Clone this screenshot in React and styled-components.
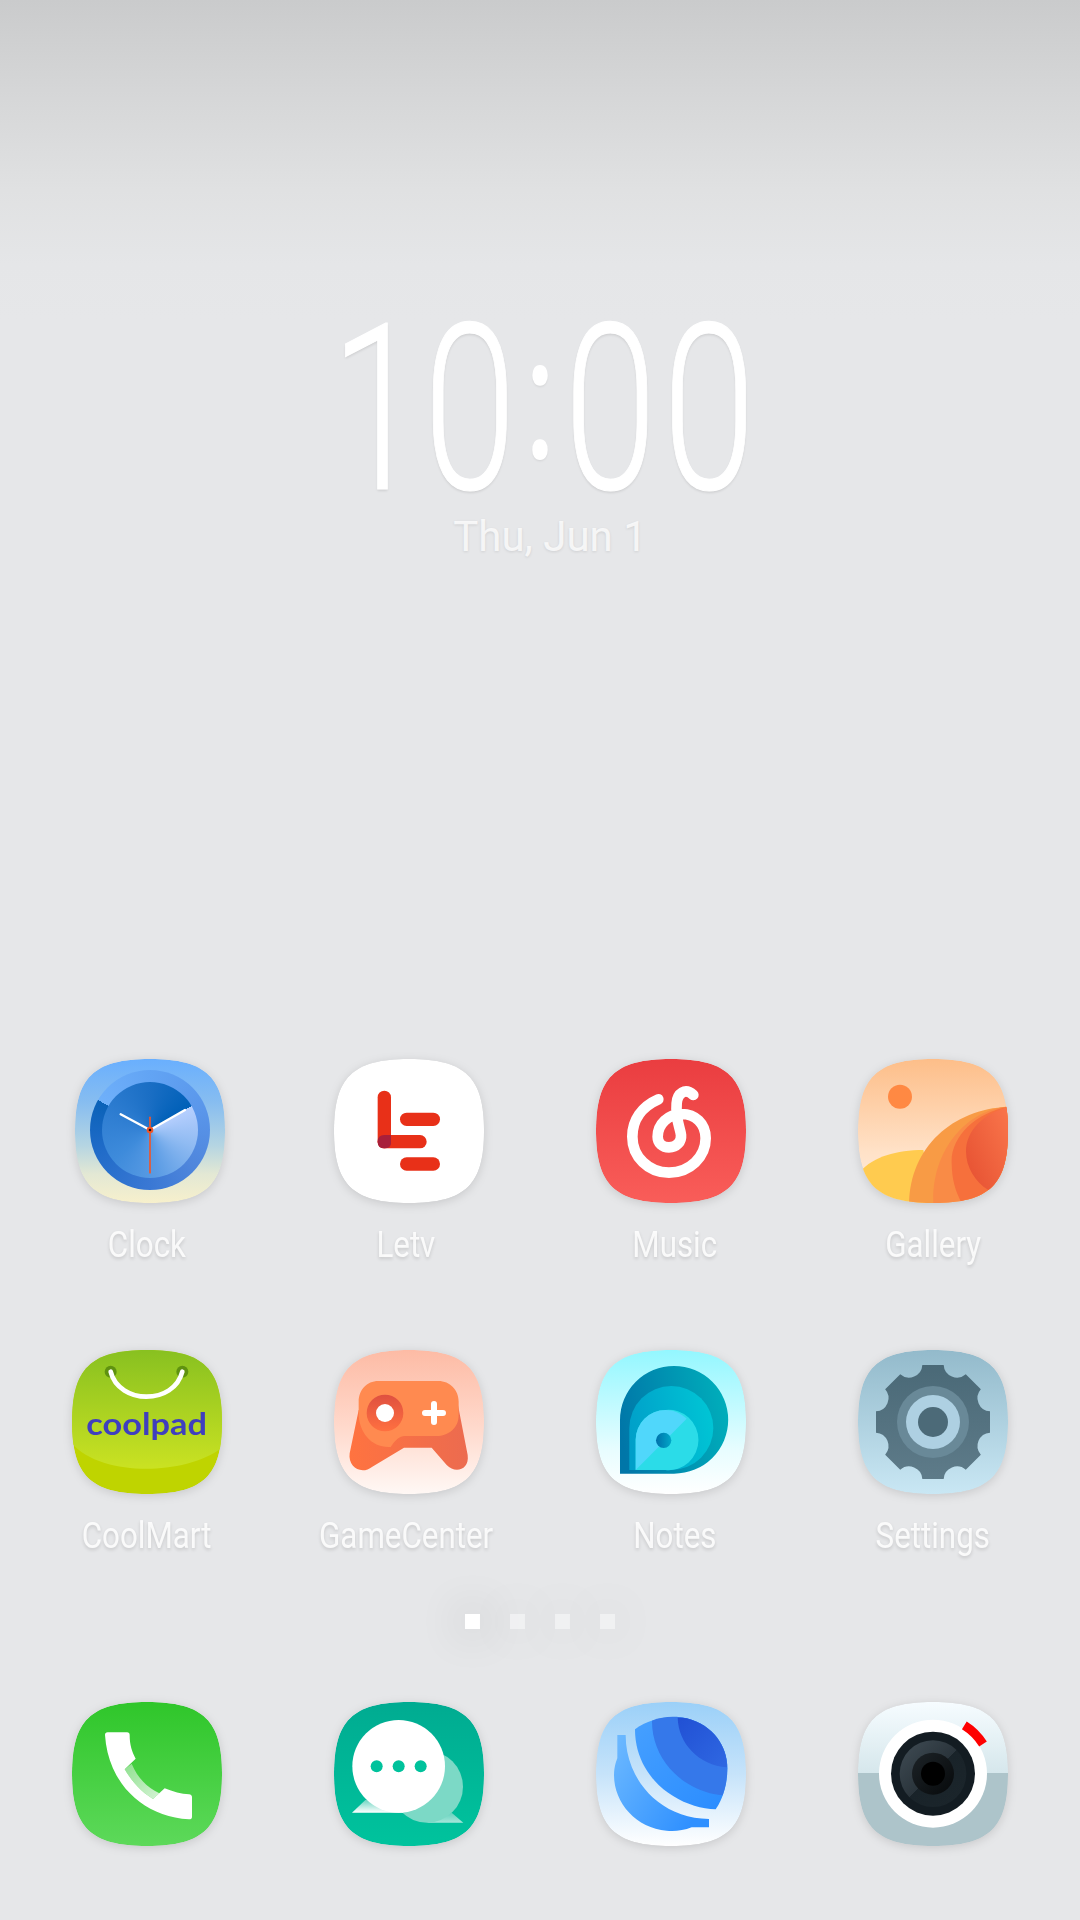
import React from 'react';
import styled, { createGlobalStyle } from 'styled-components';

const Global = createGlobalStyle`
  html, body { margin: 0; padding: 0; background: #e6e7e9; }
`;

const Screen = styled.div`
  width: 1080px;
  height: 1920px;
  overflow: hidden;
  display: flex;
  flex-direction: column;
  background: linear-gradient(180deg, #cacbcc 0px, #d5d6d7 90px, #e0e1e2 190px, #e5e6e8 265px, #e6e7e9 320px);
  font-family: Roboto, "Liberation Sans", sans-serif;
`;
const ClockBlock = styled.div`
  height: 1059px;
  display: flex;
  flex-direction: column;
  align-items: center;
  flex: none;
`;
const Time = styled.div`
  margin-top: 290px;
  height: 240px;
  line-height: 240px;
  font-size: 232px;
  font-weight: 300;
  color: #fff;
  -webkit-text-stroke: 1px #fff;
  transform: translateX(6px) scaleX(0.72);
  letter-spacing: 8.5px;
  white-space: nowrap;
  text-shadow: 0 2px 3px rgba(0,0,0,.1);
`;
const Lead = styled.span`
  letter-spacing: 0;
`;
const Colon = styled.span`
  font-size: 172px;
  font-weight: 400;
  line-height: 0;
  vertical-align: 31px;
  -webkit-text-stroke: 2px #fff;
  margin: 0 4px;
`;
const DateLine = styled.div`
  margin-top: -18px;
  margin-left: 20px;
  font-size: 42px;
  line-height: 50px;
  font-weight: 400;
  color: rgba(255,255,255,.78);
  text-shadow: 0 1px 3px rgba(0,0,0,.1);
`;
const AppGrid = styled.div`
  display: grid;
  grid-template-columns: repeat(4, 262px);
  grid-auto-rows: 291px;
  padding-left: 16px;
  flex: none;
`;
const Cell = styled.div`
  display: flex;
  flex-direction: column;
  align-items: center;
`;
const IconSvg = styled.svg`
  display: block;
  width: 150px;
  height: 144px;
  overflow: visible;
  flex: none;
  margin-left: ${p => (p.$shift || 0) * 2}px;
  filter: drop-shadow(0 2px 5px rgba(0,0,0,.13));
`;
const Label = styled.div`
  margin-top: 20px;
  margin-left: ${p => (p.$shift || 0) * 2}px;
  font-size: 36px;
  line-height: 44px;
  font-weight: 400;
  color: rgba(255,255,255,.85);
  transform: scaleX(0.87);
  white-space: nowrap;
  text-shadow: 0 2px 4px rgba(0,0,0,.14);
`;
const Pager = styled.div`
  display: flex;
  justify-content: center;
  gap: 30px;
  height: 88px;
  margin-top: -27px;
  flex: none;
`;
const Dot = styled.span`
  width: 15px;
  height: 15px;
  background: ${p => (p.$on ? '#ffffff' : 'rgba(255,255,255,.42)')};
  box-shadow: 0 0 34px ${p => (p.$on ? 20 : 24)}px rgba(0,0,0,${p => (p.$on ? .03 : .013)});
`;
const Dock = styled(AppGrid)`
  grid-auto-rows: 144px;
`;
const RoundDisc = styled.div`
  width: 100%;
  height: 100%;
  border-radius: 50%;
  background: ${p => p.$bg};
`;

const SQ = 'M75 0C132 0 150 19 150 72C150 125 132 144 75 144C18 144 0 125 0 72C0 19 18 0 75 0Z';

/* Each icon is drawn in the coordinates of a 3x crop, mapped onto the 150x144 tile. */
const Tile = ({ id, ox, oy, shift, bg, children, defs }) => (
  <IconSvg viewBox="0 0 150 144" $shift={shift}>
    <defs>
      <clipPath id={`${id}-clip`}><path d={SQ} /></clipPath>
      {bg && (
        <linearGradient id={`${id}-bg`} x1="0" y1="0" x2="0" y2="1">
          {bg.map(([o, c]) => <stop key={o} offset={o} stopColor={c} />)}
        </linearGradient>
      )}
      {defs}
    </defs>
    <g clipPath={`url(#${id}-clip)`}>
      <path d={SQ} fill={bg ? `url(#${id}-bg)` : '#fff'} />
      <g transform={`scale(${1 / 3}) translate(${-ox} ${-oy})`}>{children}</g>
    </g>
  </IconSvg>
);

const Lin = ({ id, x1 = 0, y1 = 0, x2 = 0, y2 = 1, stops }) => (
  <linearGradient id={id} x1={x1} y1={y1} x2={x2} y2={y2}>
    {stops.map(([o, c]) => <stop key={o} offset={o} stopColor={c} />)}
  </linearGradient>
);

const ClockIcon = () => (
  <Tile id="clk" ox={75} oy={57} shift={3} bg={[[0, '#69affe'], [.3, '#87bdf0'], [.6, '#b5d5e2'], [.8, '#e3e8d4'], [1, '#f7f0cc']]}>
    <foreignObject x="120" y="90" width="360" height="360">
      <RoundDisc $bg="conic-gradient(from 300deg, #6fb0fa 0deg, #62a4f4 60deg, #5a96ea 130deg, #4f86dc 190deg, #3a78d4 240deg, #1f6bc8 310deg, #0a62b8 360deg)" />
    </foreignObject>
    <foreignObject x="156" y="126" width="288" height="288">
      <RoundDisc $bg="conic-gradient(from 60deg, #b6cffe 0deg, #90bbf2 50deg, #5b9ce4 110deg, #3e8bdb 170deg, #2f7ed2 230deg, #1a6ec4 300deg, #0060b8 360deg)" />
    </foreignObject>
    <g strokeLinecap="round">
      <path d="M212 223L300 270L405 210" fill="none" stroke="#fff" strokeWidth="7" />
      <path d="M300 232V398" stroke="#f0562a" strokeWidth="5" />
    </g>
    <circle cx="300" cy="270" r="10" fill="#f0562a" />
    <circle cx="300" cy="270" r="4" fill="#111" />
  </Tile>
);

const LetvIcon = () => (
  <Tile id="let" ox={852} oy={57}>
    <g fill="#e83018">
      <rect x="983" y="152" width="40" height="173" rx="20" />
      <rect x="1050" y="218" width="120" height="40" rx="20" />
      <rect x="983" y="285" width="147" height="40" rx="20" />
      <rect x="1050" y="352" width="120" height="40" rx="20" />
    </g>
    <path d="M1003 285H1023V310Q1023 325 1003 325Q983 325 983 305Q983 285 1003 285Z" fill="#a81f3a" />
  </Tile>
);

const MusicIcon = () => (
  <Tile id="mus" ox={78} oy={57} bg={[[0, '#ea3d40'], [1, '#f95d59']]}>
    <path
      d="M265 178C215 200 187 240 187 290C187 350 235 398 297 398C360 398 407 350 407 295C407 250 375 222 335 222C295 222 263 252 263 290C263 310 278 322 297 322C320 322 335 305 333 285C330 260 316 240 320 190C322 160 345 142 370 165"
      fill="none" stroke="#fff" strokeWidth="32" strokeLinecap="round" />
  </Tile>
);

const GalleryIcon = () => (
  <Tile id="gal" ox={864} oy={57} bg={[[0, '#fdbe89'], [.65, '#ffe2c8'], [1, '#ffeede']]}
    defs={<Lin id="gal-4" x1={1} y1={0} x2={0} y2={1} stops={[[0, '#fa774c'], [1, '#e34b2e']]} />}>
    <circle cx="990" cy="170" r="36" fill="#ff8943" />
    <path d="M870 395C910 350 980 330 1060 330L1100 560H860Z" fill="#ffcb4f" />
    <path d="M1320 200C1150 205 1020 320 1017 490V560H1320Z" fill="#f89b45" />
    <path d="M1320 199C1200 205 1085 320 1090 490V560H1320Z" fill="#f98b46" />
    <path d="M1320 199C1220 215 1140 290 1145 370C1146 420 1155 450 1175 490V560H1320Z" fill="#f6703c" />
    <path d="M1320 199C1240 220 1188 270 1188 335C1188 380 1215 425 1255 450L1320 500Z" fill="url(#gal-4)" />
  </Tile>
);

const CoolMartIcon = () => (
  <Tile id="cm" ox={67} oy={60} bg={[[0, '#bfd400'], [1, '#bfd400']]}
    defs={<Lin id="cm-top" stops={[[0, '#7dbb20'], [1, '#cae222']]} />}>
    <path d="M40 0H540V330C490 390 380 416 290 416C200 416 100 390 60 330H40Z" fill="url(#cm-top)" />
    <circle cx="183" cy="125" r="18" fill="#5f9210" />
    <circle cx="398" cy="125" r="18" fill="#5f9210" />
    <path d="M183 125C195 175 245 200 290 200C340 200 385 175 398 125" fill="none" stroke="#fff" strokeWidth="14" strokeLinecap="round" />
    <text x="110" y="316" fontFamily="Lato, Inter, sans-serif" fontSize="92" fontWeight="700" fill="#3f3fbe" textLength="362" lengthAdjust="spacingAndGlyphs">coolpad</text>
  </Tile>
);

const GameIcon = () => (
  <Tile id="gc" ox={852} oy={60} bg={[[0, '#fdbba5'], [.55, '#ffdacd'], [1, '#fff8f5']]}
    defs={<>
      <Lin id="gc-b" x1={0} y1={0} x2={1} y2={0} stops={[[0, '#ff7340'], [1, '#ec6b4f']]} />
      <Lin id="gc-j" x1={0} y1={0} x2={0} y2={1} stops={[[0, '#df5040'], [1, '#ff7040']]} />
    </>}>
    <path d="M1020 153H1132C1128 172 1115 180 1100 180H1050C1035 180 1025 172 1020 153Z" fill="#ee5f36" />
    <path d="M926 240L899 370C893 412 935 436 967 410L1062 353H1145L1190 405C1215 432 1259 420 1253 375L1222 215Z" fill="url(#gc-b)" />
    <path d="M985 153H1165C1200 153 1226 180 1226 215V255C1226 295 1195 318 1160 318H1065C1048 318 1035 332 1022 351C968 355 926 310 926 250V215C926 180 950 153 985 153Z" fill="#ff8a50" />
    <circle cx="1005" cy="249" r="55" fill="url(#gc-j)" />
    <circle cx="1005" cy="249" r="27" fill="#fff" />
    <path d="M1152 222V276M1125 249H1179" stroke="#fff" strokeWidth="18" strokeLinecap="round" />
  </Tile>
);

const drop = (l, t, r, b) => {
  const rad = (r - l) / 2;
  const cx = l + rad;
  return `M${l} ${b}V${t + rad}A${rad} ${rad} 0 0 1 ${cx} ${t}A${rad} ${b - t - rad} 0 1 1 ${cx} ${b}Z`;
};

const NotesIcon = () => (
  <Tile id="nt" ox={78} oy={60} bg={[[0, '#93f7ff'], [.7, '#e8fdff'], [1, '#ffffff']]}
    defs={<>
      <Lin id="nt-a" x1={0} y1={.6} x2={1} y2={.4} stops={[[0, '#0076a8'], [1, '#00aebb']]} />
      <Lin id="nt-b" x1={0} y1={.6} x2={1} y2={.4} stops={[[0, '#009fc9'], [1, '#00c5d5']]} />
      <Lin id="nt-d" x1={0} y1={0} x2={1} y2={0} stops={[[0, '#0071ab'], [1, '#00a8c8']]} />
    </>}>
    <path d={drop(150, 108, 474, 431)} fill="url(#nt-a)" />
    <path d={drop(178, 168, 430, 420)} fill="url(#nt-b)" />
    <path d={drop(197, 240, 376, 420)} fill="#2bdce8" />
    <path d="M197 420V330A90 90 0 0 1 287 240C310 240 332 250 350 266Z" fill="#50d7fb" />
    <circle cx="281" cy="331" r="23" fill="url(#nt-d)" />
  </Tile>
);

const gearPath = (cx, cy, R, half, scoop) => {
  const pt = (x, y, a) => {
    const c = Math.cos(a), s = Math.sin(a);
    return [cx + x * c - y * s, cy + x * s + y * c].map(v => v.toFixed(1)).join(' ');
  };
  let d = '';
  for (let k = 0; k < 8; k++) {
    const a = (k * Math.PI) / 4;
    d += `${k ? 'L' : 'M'}${pt(-half, -R, a)}L${pt(half, -R, a)}`;
    d += `A${scoop} ${scoop} 0 0 0 ${pt(-half, -R, a + Math.PI / 4)}`;
  }
  return `${d}Z`;
};

const SettingsIcon = () => (
  <Tile id="st" ox={864} oy={60} bg={[[0, '#93bacb'], [1, '#c9e7f4']]}
    defs={<Lin id="st-g" stops={[[0, '#4a6977'], [1, '#5e7b89']]} />}>
    <path d={gearPath(1089, 276, 171, 32, 40)} fill="url(#st-g)" />
    <circle cx="1089" cy="276" r="108" fill="#698998" />
    <circle cx="1089" cy="276" r="81" fill="#aed0e2" />
    <circle cx="1089" cy="276" r="45" fill="#4c6a78" />
  </Tile>
);

const PhoneIcon = () => (
  <Tile id="ph" ox={67} oy={66} bg={[[0, '#2fc62a'], [1, '#5dd95a']]}
    defs={<Lin id="ph-s" x1={0} y1={0} x2={1} y2={1} stops={[[0, '#8fe08f'], [1, '#d5f3d5']]} />}>
    <path d="M246 251C265 295 290 320 329 340L310 357C275 335 250 310 225 268Z" fill="url(#ph-s)" />
    <path d="M174 157H232Q240 157 240 165C240 195 247 215 258 236L225 268C250 310 275 335 310 357L345 325C370 335 395 342 418 343Q427 344 427 352V410Q427 418 418 418C280 410 175 310 166 165Q166 157 174 157Z" fill="#fff" />
  </Tile>
);

const MessageIcon = () => (
  <Tile id="ms" ox={852} oy={66} bg={[[0, '#00ab91'], [1, '#00c39d']]}
    defs={<>
      <Lin id="ms-t" stops={[[0, '#6fd5c2'], [1, '#ffffff']]} />
      <Lin id="ms-u" stops={[[0, '#63d2bd'], [1, '#a6e6da']]} />
    </>}>
    <path d="M1205 398L1240 428H1130Z" fill="url(#ms-u)" />
    <circle cx="1131" cy="320" r="108" fill="#7cd9c6" />
    <path d="M906 398L946 360H1060V398Z" fill="url(#ms-t)" />
    <circle cx="1046" cy="259" r="139" fill="#fff" />
    <g fill="#00c29c">
      <circle cx="980" cy="259" r="18" />
      <circle cx="1046" cy="259" r="18" />
      <circle cx="1112" cy="259" r="18" />
    </g>
  </Tile>
);

const BrowserIcon = () => (
  <Tile id="br" ox={78} oy={66} bg={[[0, '#9bd0f8'], [.5, '#c6e3fa'], [1, '#ffffff']]}
    defs={<>
      <Lin id="br-l" x1={0} y1={0} x2={1} y2={.6} stops={[[0, '#6ebaff'], [1, '#2f90ff']]} />
      <Lin id="br-m" x1={0} y1={0} x2={1} y2={1} stops={[[0, '#46a0ff'], [1, '#2a8cff']]} />
      <Lin id="br-d" x1={0} y1={0} x2={1} y2={1} stops={[[0, '#2150d4'], [1, '#2f68e2']]} />
    </>}>
    <path d="M142 165H167C167 300 270 415 417 417V442H365C340 452 310 455 290 452C200 445 132 370 132 285C132 260 140 240 142 235Z" fill="url(#br-l)" />
    <path d="M195 148C240 115 300 105 350 115C430 135 472 200 472 265C472 310 460 355 437 388C330 385 195 300 195 148Z" fill="url(#br-m)" />
    <path d="M246 122C280 108 320 108 350 115C430 135 472 200 472 265C472 295 467 322 458 346C340 335 245 240 246 122Z" fill="#3578ea" />
    <path d="M323 113C335 113 342 113 350 115C430 135 472 200 471 262C385 255 325 190 323 113Z" fill="url(#br-d)" />
  </Tile>
);

const CameraIcon = () => (
  <Tile id="cam" ox={864} oy={66} bg={[[0, '#f6fcff'], [.49, '#d6e7ec'], [.49, '#adc4ca'], [1, '#adc4ca']]}
    defs={<>
      <Lin id="cam-r" x1={.1} y1={.1} x2={.9} y2={.9} stops={[[0, '#3c4850'], [.5, '#2a343b'], [.5, '#192329'], [1, '#1b252b']]} />
      <Lin id="cam-c" x1={.1} y1={.1} x2={.9} y2={.9} stops={[[0, '#1a2024'], [1, '#090c0e']]} />
    </>}>
    <circle cx="1089" cy="281" r="162" fill="#fff" />
    <path d="M1183 136A175 175 0 0 1 1239 192" fill="none" stroke="#fe0000" strokeWidth="27" />
    <circle cx="1089" cy="281" r="126" fill="#131c22" />
    <circle cx="1089" cy="281" r="100" fill="url(#cam-r)" />
    <circle cx="1089" cy="281" r="63" fill="url(#cam-c)" />
    <circle cx="1089" cy="281" r="36" fill="#000" />
  </Tile>
);

const apps = [
  { name: 'Clock', Icon: ClockIcon, shift: 0 },
  { name: 'Letv', Icon: LetvIcon, shift: -3 },
  { name: 'Music', Icon: MusicIcon, shift: 4 },
  { name: 'Gallery', Icon: GalleryIcon, shift: 0 },
  { name: 'CoolMart', Icon: CoolMartIcon, shift: 0 },
  { name: 'GameCenter', Icon: GameIcon, shift: -3 },
  { name: 'Notes', Icon: NotesIcon, shift: 4 },
  { name: 'Settings', Icon: SettingsIcon, shift: 0 },
];
const dock = [PhoneIcon, MessageIcon, BrowserIcon, CameraIcon];

export default function App() {
  return (
    <Screen>
      <Global />
      <ClockBlock>
        <Time><Lead>1</Lead>0<Colon>:</Colon>00</Time>
        <DateLine>Thu, Jun 1</DateLine>
      </ClockBlock>
      <AppGrid>
        {apps.map(({ name, Icon, shift }) => (
          <Cell key={name}>
            <Icon />
            <Label $shift={shift}>{name}</Label>
          </Cell>
        ))}
      </AppGrid>
      <Pager>
        {[0, 1, 2, 3].map(i => <Dot key={i} $on={i === 0} />)}
      </Pager>
      <Dock>
        {dock.map((Icon, i) => <Cell key={i}><Icon /></Cell>)}
      </Dock>
    </Screen>
  );
}
